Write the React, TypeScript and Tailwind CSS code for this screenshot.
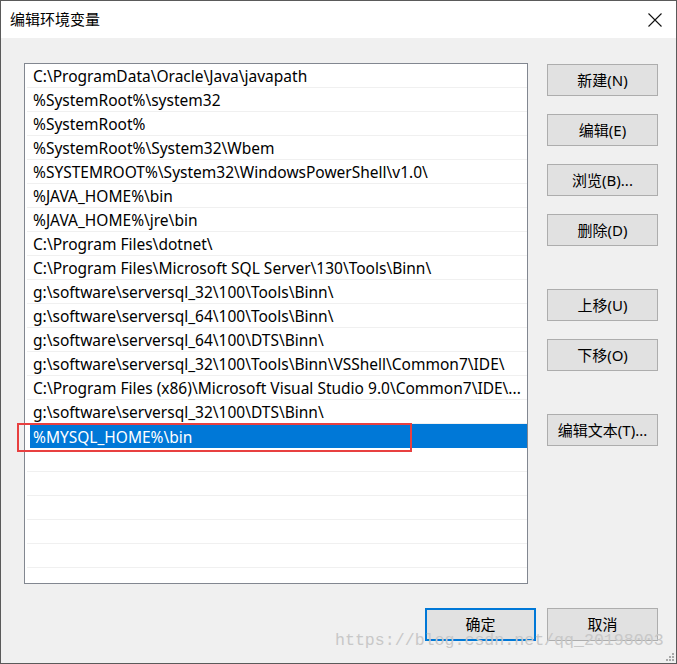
import React from "react";

const paths = [
  "C:\\ProgramData\\Oracle\\Java\\javapath",
  "%SystemRoot%\\system32",
  "%SystemRoot%",
  "%SystemRoot%\\System32\\Wbem",
  "%SYSTEMROOT%\\System32\\WindowsPowerShell\\v1.0\\",
  "%JAVA_HOME%\\bin",
  "%JAVA_HOME%\\jre\\bin",
  "C:\\Program Files\\dotnet\\",
  "C:\\Program Files\\Microsoft SQL Server\\130\\Tools\\Binn\\",
  "g:\\software\\serversql_32\\100\\Tools\\Binn\\",
  "g:\\software\\serversql_64\\100\\Tools\\Binn\\",
  "g:\\software\\serversql_64\\100\\DTS\\Binn\\",
  "g:\\software\\serversql_32\\100\\Tools\\Binn\\VSShell\\Common7\\IDE\\",
  "C:\\Program Files (x86)\\Microsoft Visual Studio 9.0\\Common7\\IDE\\...",
  "g:\\software\\serversql_32\\100\\DTS\\Binn\\",
  "%MYSQL_HOME%\\bin",
];

const font = { fontFamily: '"Noto Sans", "Noto Sans CJK SC", sans-serif' };

function Btn({ label, className = "" }: { label: string; className?: string }) {
  return (
    <div
      className={
        "flex h-[32px] w-[111px] items-center justify-center border border-[#adadad] bg-[#e1e1e1] text-[15px] text-black " +
        className
      }
    >
      {label}
    </div>
  );
}

export default function App() {
  const emptyRows = 5;
  return (
    <div
      className="relative flex h-[664px] w-[677px] flex-col overflow-hidden border border-[#5a5a5a] bg-[#f0f0f0]"
      style={font}
    >
      {/* Title bar */}
      <div className="flex h-[37px] shrink-0 items-center justify-between bg-white pl-[9px] pr-[14px]">
        <span className="text-[15px] text-black">编辑环境变量</span>
        <svg width="14" height="14" viewBox="0 0 14 14">
          <path d="M0.5 0.5 L13.5 13.5 M13.5 0.5 L0.5 13.5" stroke="#111" strokeWidth="1.1" />
        </svg>
      </div>

      {/* Body */}
      <div className="flex pl-[23px] pt-[25px]">
        {/* List */}
        <div className="h-[521px] w-[504px] border border-[#828790] bg-white pl-[1px]">
          {paths.map((p, i) => {
            const selected = i === paths.length - 1;
            return (
              <div key={i} className="h-[24px] pl-[1px]">
                <div
                  className={
                    "relative flex h-[24px] items-center whitespace-nowrap pt-[3px] text-[15.5px] " +
                    (selected ? "ml-[3px] bg-[#0078d7] pl-[3px] text-white" : "border-b border-[#f0f0f0] pl-[6px] text-black")
                  }
                >
                  {p}
                  {selected && (
                    <div className="absolute left-[-13px] top-[-1px] h-[29px] w-[395px] border-2 border-[#e84040]" />
                  )}
                </div>
              </div>
            );
          })}
          {Array.from({ length: emptyRows }).map((_, i) => (
            <div key={"e" + i} className="h-[24px] pl-[1px]">
              <div className="h-[24px] border-b border-[#f0f0f0]" />
            </div>
          ))}
        </div>

        {/* Buttons */}
        <div className="ml-[19px] mt-[1px] flex flex-col">
          <Btn label="新建(N)" />
          <Btn label="编辑(E)" className="mt-[18px]" />
          <Btn label="浏览(B)..." className="mt-[18px]" />
          <Btn label="删除(D)" className="mt-[18px]" />
          <Btn label="上移(U)" className="mt-[43px]" />
          <Btn label="下移(O)" className="mt-[18px]" />
          <Btn label="编辑文本(T)..." className="mt-[43px]" />
        </div>
      </div>

      {/* Footer */}
      <div className="mt-[24px] flex justify-end gap-[11px] pr-[18px]">
        <div className="flex h-[33px] w-[111px] items-center justify-center border-2 border-[#0078d7] bg-[#e1e1e1] text-[15px] text-black">
          确定
        </div>
        <div className="flex h-[33px] w-[111px] items-center justify-center border border-[#adadad] bg-[#e1e1e1] text-[15px] text-black">
          取消
        </div>
      </div>

      {/* Watermark */}
      <div
        className="pointer-events-none absolute left-[334px] top-[629px] text-[16.6px] leading-[22px] text-[#c8c8c8]"
        style={{ fontFamily: '"Liberation Mono", monospace' }}
      >
        https://blog.csdn.net/qq_20198003
      </div>

      {/* Resize grip */}
      <svg className="absolute bottom-[1px] right-[1px]" width="10" height="10" viewBox="0 0 10 10">
        <rect x="7" y="1" width="2" height="2" fill="#a8a8a8" />
        <rect x="4" y="4" width="2" height="2" fill="#a8a8a8" />
        <rect x="7" y="4" width="2" height="2" fill="#a8a8a8" />
        <rect x="1" y="7" width="2" height="2" fill="#a8a8a8" />
        <rect x="4" y="7" width="2" height="2" fill="#a8a8a8" />
        <rect x="7" y="7" width="2" height="2" fill="#a8a8a8" />
      </svg>
    </div>
  );
}
